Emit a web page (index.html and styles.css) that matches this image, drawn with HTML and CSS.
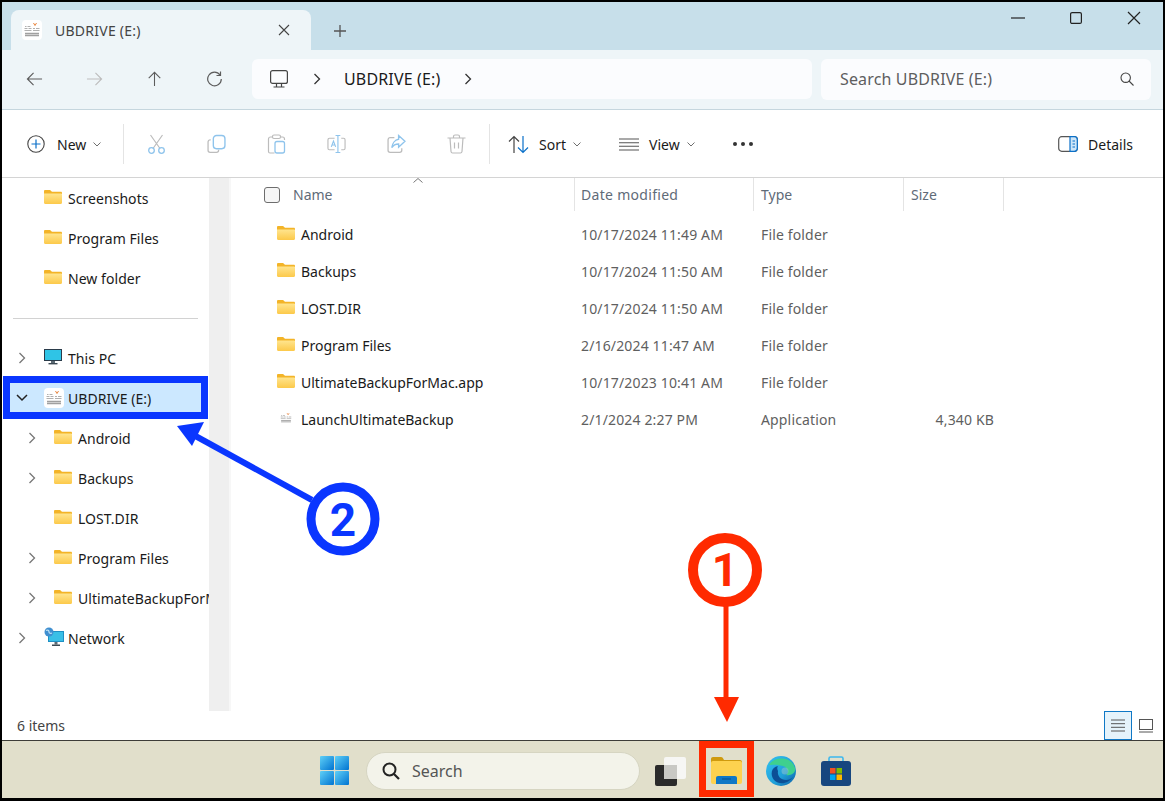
FILE: index.html
```html
<!DOCTYPE html>
<html lang="en">

<head>
    <meta charset="UTF-8" />
    <title>UBDRIVE (E:) - File Explorer</title>
    <link rel="stylesheet" href="styles.css">
</head>

<body>
    <!-- shared icons -->
    <svg class="defs">
        <defs>
            <linearGradient id="folderFill" x1="0" y1="0" x2="0" y2="1">
                <stop offset="0" stop-color="#ffe58f" />
                <stop offset="1" stop-color="#fcc94a" />
            </linearGradient>
            <linearGradient id="winFill" x1="0" y1="0" x2="1" y2="1">
                <stop offset="0" stop-color="#5fd0f7" />
                <stop offset="1" stop-color="#0073d1" />
            </linearGradient>
            <linearGradient id="edgeFill" x1="0" y1="0" x2="1" y2="1">
                <stop offset="0" stop-color="#35c1f1" />
                <stop offset="0.6" stop-color="#1f9fd8" />
                <stop offset="1" stop-color="#0c59a4" />
            </linearGradient>
            <symbol id="folder" viewBox="0 0 18 14">
                <path d="M0 1.2C0 .5.5 0 1.2 0h4.400c.4 0 .7.1 1 .4L8 1.800h8.800c.7 0 1.200.5 1.200 1.200v1H0z" fill="#f3b428" />
                <path d="M0 3.400h16.800c.7 0 1.200.5 1.200 1.200v8.200c0 .7-.5 1.200-1.200 1.200H1.200C.5 14 0 13.500 0 12.800z" fill="url(#folderFill)" />
            </symbol>
            <symbol id="ublogo" viewBox="0 0 20 20">
                <path d="M11.500 3l1.500 2.500L14.500 3" fill="none" stroke="#e8843c" stroke-width="1" />
                <path d="M3 6.500h1.500M5.500 6.500h3M2.500 8.500h3M6.500 8.500h3M11 8.500h2M14 8.500h3.500M2.500 10.500h7M11 10.500h6.500" stroke="#b0b0b0" stroke-width="1.100" />
                <path d="M3 13.500h14M3 15.500h14" stroke="#a0a0a0" stroke-width="1.300" />
            </symbol>
            <symbol id="chevR" viewBox="0 0 8 12">
                <path d="M1.500 1l5 5-5 5" fill="none" stroke="currentColor" stroke-width="1.300" />
            </symbol>
            <symbol id="caret" viewBox="0 0 8 5">
                <path d="M.5.500L4 4 7.500.500" fill="none" stroke="#6e6e6e" stroke-width="1" />
            </symbol>
        </defs>
    </svg>

    <div class="window">
        <!-- title bar with tab -->
        <div class="tabbar">
            <div class="tab">
                <svg class="tab-logo"><use href="#ublogo" /></svg>
                <span class="tab-title">UBDRIVE (E:)</span>
                <svg class="tab-close" viewBox="0 0 12 12"><path d="M1 1l10 10M11 1L1 11" stroke="#444" stroke-width="1.100" /></svg>
            </div>
            <svg class="tab-add" viewBox="0 0 14 14"><path d="M7 1v12M1 7h12" stroke="#555" stroke-width="1.300" /></svg>
            <div class="win-controls">
                <svg viewBox="0 0 14 14"><path d="M0 7h14" stroke="#222" stroke-width="1.200" /></svg>
                <svg viewBox="0 0 14 14"><rect x="1.600" y="1.600" width="10.800" height="10.800" rx="1.500" fill="none" stroke="#222" stroke-width="1.200" /></svg>
                <svg viewBox="0 0 14 14"><path d="M1 1l12 12M13 1L1 13" stroke="#222" stroke-width="1.200" /></svg>
            </div>
        </div>

        <!-- navigation and address -->
        <div class="navbar">
            <div class="nav-btn">
                <svg viewBox="0 0 18 16"><path d="M17 8H1.500M8 1.500L1.500 8 8 14.500" fill="none" stroke="#5c5c5c" stroke-width="1.200" /></svg>
            </div>
            <div class="nav-btn">
                <svg viewBox="0 0 18 16"><path d="M1 8h15.500M10 1.500L16.500 8 10 14.500" fill="none" stroke="#bdbdbd" stroke-width="1.200" /></svg>
            </div>
            <div class="nav-btn">
                <svg viewBox="0 0 16 18"><path d="M8 17V1.500M1.500 8L8 1.500 14.500 8" fill="none" stroke="#5c5c5c" stroke-width="1.200" /></svg>
            </div>
            <div class="nav-btn">
                <svg viewBox="0 0 16 16"><path d="M13.500 4A6.800 6.800 0 1 0 14.800 8" fill="none" stroke="#5c5c5c" stroke-width="1.200" /><path d="M14 .5v4h-4" fill="none" stroke="#5c5c5c" stroke-width="1.200" /></svg>
            </div>
            <div class="address">
                <svg class="addr-pc" viewBox="0 0 18 18"><rect x=".6" y=".6" width="16.800" height="12.800" rx="2" fill="none" stroke="#444" stroke-width="1.200" /><path d="M6.500 13.500v3M11.500 13.500v3M3.500 17h11" fill="none" stroke="#444" stroke-width="1.200" /></svg>
                <svg class="addr-chev"><use href="#chevR" /></svg>
                <span class="addr-text">UBDRIVE (E:)</span>
                <svg class="addr-chev"><use href="#chevR" /></svg>
            </div>
            <div class="searchbox">
                <span>Search UBDRIVE (E:)</span>
                <svg viewBox="0 0 14 14"><circle cx="5.700" cy="5.700" r="4.700" fill="none" stroke="#444" stroke-width="1.100" /><path d="M9 9l4.500 4.500" stroke="#444" stroke-width="1.100" /></svg>
            </div>
        </div>

        <!-- command bar -->
        <div class="toolbar">
            <div class="tool-new">
                <svg class="tool-svg" viewBox="0 0 18 18"><circle cx="9" cy="9" r="8.200" fill="none" stroke="#444" stroke-width="1.100" /><path d="M9 4.500v9M4.500 9h9" stroke="#0a70c9" stroke-width="1.200" /></svg>
                <span>New</span>
                <svg class="caret"><use href="#caret" /></svg>
            </div>
            <div class="tool-sep"></div>
            <div class="tool-icons">
                <div class="tool-icon">
                    <svg viewBox="0 0 18 20"><path d="M3 1l9.500 13.500M15 1L5.500 14.500" fill="none" stroke="#bcbcbc" stroke-width="1.200" /><circle cx="4" cy="16.500" r="2.800" fill="none" stroke="#8fc4ec" stroke-width="1.300" /><circle cx="14" cy="16.500" r="2.800" fill="none" stroke="#8fc4ec" stroke-width="1.300" /></svg>
                </div>
                <div class="tool-icon">
                    <svg viewBox="0 0 18 18"><path d="M3.500 5H3C1.900 5 1 5.900 1 7v8c0 1.100.9 2 2 2h6c1.100 0 2-.9 2-2v-.5" fill="none" stroke="#bcbcbc" stroke-width="1.200" /><rect x="6" y="1" width="11" height="12.500" rx="3" fill="none" stroke="#8fc4ec" stroke-width="1.300" /></svg>
                </div>
                <div class="tool-icon">
                    <svg viewBox="0 0 18 20"><path d="M5 3H3C1.900 3 1 3.900 1 5v12.500c0 .8.700 1.500 1.500 1.500H7M13 3h2c1.100 0 2 .9 2 2v1" fill="none" stroke="#bcbcbc" stroke-width="1.200" /><rect x="5" y="1" width="8" height="3.500" rx="1.500" fill="none" stroke="#bcbcbc" stroke-width="1.200" /><rect x="7.500" y="7.500" width="9.500" height="11.500" rx="2" fill="none" stroke="#8fc4ec" stroke-width="1.300" /></svg>
                </div>
                <div class="tool-icon">
                    <svg viewBox="0 0 20 20"><path d="M8 4H2.500C1.700 4 1 4.700 1 5.500v9c0 .8.700 1.500 1.500 1.500H8M15 4h2.500c.8 0 1.500.7 1.500 1.500v9c0 .8-.7 1.500-1.500 1.500H15" fill="none" stroke="#bcbcbc" stroke-width="1.200" /><path d="M11.500 1v18M9 1h5M9 19h5M4.500 13l2.300-6 2.300 6M5.300 11h3" fill="none" stroke="#8fc4ec" stroke-width="1.200" /></svg>
                </div>
                <div class="tool-icon">
                    <svg viewBox="0 0 18 18"><path d="M7 3H3C1.900 3 1 3.900 1 5v10c0 1.100.9 2 2 2h9c1.100 0 2-.9 2-2v-2" fill="none" stroke="#bcbcbc" stroke-width="1.200" /><path d="M11 1l6 5.500-6 5.500V9C8 9 6 10 4.500 12.500 5 8.500 7.500 5 11 4.500z" fill="none" stroke="#8fc4ec" stroke-width="1.300" /></svg>
                </div>
                <div class="tool-icon">
                    <svg viewBox="0 0 18 20"><path d="M0 4h18M6 4V2.500C6 1.700 6.700 1 7.500 1h3c.8 0 1.500.7 1.500 1.500V4M2.500 4l1 13.500c.1.900.8 1.500 1.600 1.500h7.800c.8 0 1.500-.6 1.600-1.500l1-13.500M7 8.500v6M11 8.500v6" fill="none" stroke="#bcbcbc" stroke-width="1.200" /></svg>
                </div>
            </div>
            <div class="tool-sep"></div>
            <div class="tool-sort">
                <svg class="sort-svg" viewBox="0 0 22 19"><path d="M6 18V1.500M1 6.500l5-5 5 5" fill="none" stroke="#444" stroke-width="1.200" /><path d="M15 1v16.500M10 12.500l5 5 5-5" fill="none" stroke="#0a70c9" stroke-width="1.200" /></svg>
                <span>Sort</span>
                <svg class="caret"><use href="#caret" /></svg>
            </div>
            <div class="tool-view">
                <svg class="view-svg" viewBox="0 0 20 13"><path d="M0 1h20M0 4.700h20M0 8.300h20M0 12h20" stroke="#555" stroke-width="1.100" /></svg>
                <span>View</span>
                <svg class="caret"><use href="#caret" /></svg>
            </div>
            <div class="tool-more"><i></i><i></i><i></i></div>
            <div class="tool-details">
                <svg viewBox="0 0 20 16"><rect x=".7" y=".7" width="18.600" height="14.600" rx="3" fill="none" stroke="#555" stroke-width="1.200" /><path d="M12 .7h4.300c1.700 0 3 1.300 3 3v8.600c0 1.700-1.300 3-3 3H12z" fill="#cfe6f8" stroke="#0a70c9" stroke-width="1.200" /><path d="M14.500 5h2.500M14.500 8h2.500M14.500 11h2.500" stroke="#0a70c9" stroke-width="1" /></svg>
                <span>Details</span>
            </div>
        </div>

        <div class="main">
            <!-- folder tree -->
            <div class="sidebar">
                <div class="tree-row"><span class="tree-arrow"></span><svg class="folder-icon"><use href="#folder" /></svg><span>Screenshots</span></div>
                <div class="tree-row"><span class="tree-arrow"></span><svg class="folder-icon"><use href="#folder" /></svg><span>Program Files</span></div>
                <div class="tree-row"><span class="tree-arrow"></span><svg class="folder-icon"><use href="#folder" /></svg><span>New folder</span></div>
                <div class="tree-sep"></div>
                <div class="tree-row">
                    <span class="tree-arrow"><svg><use href="#chevR" /></svg></span>
                    <svg class="folder-icon pc-icon" viewBox="0 0 18 16"><rect x="0" y="0" width="18" height="12" fill="#2a3b4a" /><rect x="1" y="1" width="16" height="10" fill="#2fc4e6" /><rect x="7" y="12" width="4" height="2" fill="#5c6a74" /><rect x="4.500" y="14" width="9" height="1.400" fill="#3d4a54" /></svg>
                    <span>This PC</span>
                </div>
                <div class="tree-row selected">
                    <span class="tree-arrow"><svg class="open" viewBox="0 0 12 8"><path d="M1 1l5 5 5-5" fill="none" stroke="#222" stroke-width="1.500" /></svg></span>
                    <span class="drive-icon"><svg><use href="#ublogo" /></svg></span>
                    <span>UBDRIVE (E:)</span>
                </div>
                <div class="tree-row sub"><span class="tree-arrow"><svg><use href="#chevR" /></svg></span><svg class="folder-icon"><use href="#folder" /></svg><span>Android</span></div>
                <div class="tree-row sub"><span class="tree-arrow"><svg><use href="#chevR" /></svg></span><svg class="folder-icon"><use href="#folder" /></svg><span>Backups</span></div>
                <div class="tree-row sub"><span class="tree-arrow"></span><svg class="folder-icon"><use href="#folder" /></svg><span>LOST.DIR</span></div>
                <div class="tree-row sub"><span class="tree-arrow"><svg><use href="#chevR" /></svg></span><svg class="folder-icon"><use href="#folder" /></svg><span>Program Files</span></div>
                <div class="tree-row sub"><span class="tree-arrow"><svg><use href="#chevR" /></svg></span><svg class="folder-icon"><use href="#folder" /></svg><span>UltimateBackupForMac.app</span></div>
                <div class="tree-row">
                    <span class="tree-arrow"><svg><use href="#chevR" /></svg></span>
                    <svg class="folder-icon net-icon" viewBox="0 0 20 20"><rect x="4" y="4" width="16" height="11" fill="#1f8fc4" /><rect x="5" y="5" width="14" height="9" fill="#39bfe6" /><rect x="10.500" y="15" width="3" height="2.500" fill="#5c6a74" /><rect x="8" y="17.500" width="8" height="1.500" fill="#3d4a54" /><circle cx="5" cy="5" r="4.500" fill="#3f8fd0" /><path d="M2 3.500c2-1 3 0 3 1.500s2 1.500 3 1" fill="none" stroke="#bfe3f7" stroke-width="1.200" /></svg>
                    <span>Network</span>
                </div>
            </div>
            <div class="scrolltrack"></div>

            <!-- file list -->
            <div class="content">
                <div class="list-head">
                    <div class="head-name">
                        <span class="checkbox"></span>
                        <span>Name</span>
                        <svg class="sort-caret" viewBox="0 0 10 5"><path d="M.5 4.500L5 .5l4.500 4" fill="none" stroke="#777" stroke-width="1" /></svg>
                    </div>
                    <div class="head-date">Date modified</div>
                    <div class="head-type">Type</div>
                    <div class="head-size">Size</div>
                </div>
                <div class="file-row"><span class="file-name"><svg class="folder-icon"><use href="#folder" /></svg>Android</span><span>10/17/2024 11:49 AM</span><span>File folder</span><span class="file-size"></span></div>
                <div class="file-row"><span class="file-name"><svg class="folder-icon"><use href="#folder" /></svg>Backups</span><span>10/17/2024 11:50 AM</span><span>File folder</span><span class="file-size"></span></div>
                <div class="file-row"><span class="file-name"><svg class="folder-icon"><use href="#folder" /></svg>LOST.DIR</span><span>10/17/2024 11:50 AM</span><span>File folder</span><span class="file-size"></span></div>
                <div class="file-row"><span class="file-name"><svg class="folder-icon"><use href="#folder" /></svg>Program Files</span><span>2/16/2024 11:47 AM</span><span>File folder</span><span class="file-size"></span></div>
                <div class="file-row"><span class="file-name"><svg class="folder-icon"><use href="#folder" /></svg>UltimateBackupForMac.app</span><span>10/17/2023 10:41 AM</span><span>File folder</span><span class="file-size"></span></div>
                <div class="file-row"><span class="file-name"><svg class="folder-icon"><use href="#ublogo" /></svg>LaunchUltimateBackup</span><span>2/1/2024 2:27 PM</span><span>Application</span><span class="file-size">4,340 KB</span></div>
            </div>
        </div>

        <div class="statusbar">
            <span>6 items</span>
            <div class="view-toggle">
                <div class="toggle-list"><svg viewBox="0 0 14 13"><path d="M0 1h14M0 4.700h14M0 8.300h14M0 12h14" stroke="#555" stroke-width="1" /></svg></div>
                <svg class="toggle-tile" viewBox="0 0 14 14"><rect x=".5" y=".5" width="13" height="10" fill="none" stroke="#555" /><path d="M0 13h14" stroke="#555" /></svg>
            </div>
        </div>

        <!-- taskbar -->
        <div class="taskbar">
            <svg class="task-win" viewBox="0 0 29 29">
                <rect x="0" y="0" width="14" height="14" rx="1" fill="url(#winFill)" />
                <rect x="15" y="0" width="14" height="14" rx="1" fill="url(#winFill)" />
                <rect x="0" y="15" width="14" height="14" rx="1" fill="url(#winFill)" />
                <rect x="15" y="15" width="14" height="14" rx="1" fill="url(#winFill)" />
            </svg>
            <div class="task-search">
                <svg viewBox="0 0 18 18"><circle cx="7.500" cy="7.500" r="6" fill="none" stroke="#222" stroke-width="2" /><path d="M12 12l5 5" stroke="#222" stroke-width="2.200" /></svg>
                <span>Search</span>
            </div>
            <svg class="task-view" viewBox="0 0 31 30">
                <rect x="9" y="1" width="22" height="22" rx="2" fill="#f6f6f4" />
                <rect x="0" y="9" width="22" height="21" rx="2" fill="#2a2a2a" />
                <rect x="9" y="9" width="13" height="14" fill="#c8c8c4" />
            </svg>
            <svg class="task-folder" viewBox="0 0 31 27">
                <path d="M0 2c0-1.100.9-2 2-2h8c.7 0 1.300.3 1.700.8L13 3h16c1.100 0 2 .9 2 2v3H0z" fill="#cf9a0e" />
                <rect x="0" y="4" width="31" height="23" rx="2" fill="#fdd24f" />
                <path d="M5 27v-6c0-1.100.9-2 2-2h17c1.100 0 2 .9 2 2v6z" fill="#0f78c6" />
                <path d="M11 22h9" stroke="#0a4f87" stroke-width="1" />
            </svg>
            <svg class="task-edge" viewBox="0 0 30 30">
                <circle cx="15" cy="15" r="15" fill="url(#edgeFill)" />
                <path d="M3 9C7 1 25 -1 29 12c1 5-4 8-9 7 3-2 3-7-3-9C10 8 5 9 3 9z" fill="#3fd08e" />
                <path d="M12 15c-1 5 3 9 8 9 3 0 5-1 7-3-4 6-13 9-19 3-4-5-3-13 4-14-1 1-1 3 0 5z" fill="#0c4f96" />
                <circle cx="19" cy="15" r="3.500" fill="#e1dfcb" opacity="0.3" />
            </svg>
            <svg class="task-store" viewBox="0 0 30 30">
                <path d="M8 5V2.500C8 1.500 8.800 1 9.500 1h11c.7 0 1.500.5 1.500 1.500V5" fill="none" stroke="#3db8ee" stroke-width="1.600" />
                <rect x="0" y="5" width="30" height="25" rx="3" fill="#17467f" />
                <rect x="9" y="12" width="5.500" height="5.500" fill="#f25022" />
                <rect x="15.500" y="12" width="5.500" height="5.500" fill="#7fba00" />
                <rect x="9" y="18.500" width="5.500" height="5.500" fill="#00a4ef" />
                <rect x="15.500" y="18.500" width="5.500" height="5.500" fill="#ffb900" />
            </svg>
        </div>
    </div>

    <!-- annotations painted on top of the screenshot -->
    <svg class="marks" viewBox="0 0 1165 801">
        <rect x="6.500" y="379.500" width="198" height="36" fill="none" stroke="#0a36ff" stroke-width="7" />
        <path d="M312 500L190 433" stroke="#0a36ff" stroke-width="6" />
        <path d="M177 426l27-4-12 24z" fill="#0a36ff" />
        <circle cx="343" cy="519" r="32" fill="#fff" stroke="#0a36ff" stroke-width="9" />
        <text class="mark-num" x="343" y="536" text-anchor="middle" fill="#0a36ff">2</text>
        <circle cx="725" cy="570" r="32" fill="#fff" stroke="#ff2a00" stroke-width="10" />
        <text class="mark-num" x="725" y="586" text-anchor="middle" fill="#ff2a00">1</text>
        <path d="M726 606v92" stroke="#ff2a00" stroke-width="5" />
        <path d="M714 697h25l-12 25z" fill="#ff2a00" />
        <rect x="702.500" y="744.500" width="48" height="49" fill="none" stroke="#ff2a00" stroke-width="7" />
    </svg>
</body>

</html>
```

FILE: styles.css
```css
* {
    box-sizing: border-box;
}

html,
body {
    margin: 0;
    padding: 0;
}

body {
    position: relative;
    width: 1165px;
    height: 801px;
    overflow: hidden;
    background: #000;
    font-family: "Noto Sans", "Liberation Sans", sans-serif;
    font-size: 14px;
    color: #1a1a1a;
}

svg {
    display: block;
    flex: none;
}

.defs {
    width: 0;
    height: 0;
}

.window {
    width: 1161px;
    height: 796px;
    margin: 2px 2px 0;
    background: #fff;
    display: flex;
    flex-direction: column;
}

/* title bar */
.tabbar {
    height: 48px;
    background: #c7dfea;
    display: flex;
    align-items: flex-end;
    flex: none;
}

.tab {
    width: 300px;
    height: 40px;
    margin-left: 9px;
    background: #eef5f8;
    border-radius: 8px 8px 0 0;
    display: flex;
    align-items: center;
    padding: 0 21px 0 11px;
}

.tab-logo {
    width: 20px;
    height: 20px;
    background: #fff;
    border-radius: 4px;
}

.tab-title {
    margin-left: 13px;
    flex: 1;
    color: #444;
    letter-spacing: 0.25px;
}

.tab-close {
    width: 12px;
    height: 12px;
}

.tab-add {
    width: 14px;
    height: 14px;
    margin: 0 0 12px 22px;
}

.win-controls {
    margin-left: auto;
    align-self: flex-start;
    display: flex;
    gap: 44px;
    padding: 9px 22px 0 0;
}

.win-controls svg {
    width: 14px;
    height: 14px;
}

/* navigation */
.navbar {
    height: 60px;
    background: #eef5f8;
    border-bottom: 1px solid #c5d6de;
    display: flex;
    align-items: center;
    padding: 0 12px 1px 2px;
    flex: none;
}

.nav-btn {
    width: 60px;
    display: flex;
    justify-content: center;
}

.nav-btn svg {
    width: 17px;
    height: 16px;
}

.address {
    width: 560px;
    height: 40px;
    margin-left: 8px;
    background: #fbfcfe;
    border-radius: 6px;
    display: flex;
    align-items: center;
    padding-left: 18px;
    font-size: 16px;
}

.addr-pc {
    width: 18px;
    height: 18px;
}

.addr-chev {
    width: 8px;
    height: 12px;
    margin-left: 25px;
    color: #333;
}

.addr-text {
    margin-left: 23px;
    margin-right: -1px;
    letter-spacing: 0.15px;
}

.searchbox {
    width: 330px;
    height: 41px;
    margin-left: 9px;
    background: #fbfcfe;
    border-radius: 6px;
    display: flex;
    align-items: center;
    justify-content: space-between;
    padding: 0 17px 0 19px;
    font-size: 16px;
    color: #5e5e5e;
    letter-spacing: 0.15px;
}

.searchbox svg {
    width: 14px;
    height: 14px;
}

/* command bar */
.toolbar {
    height: 68px;
    padding-top: 1px;
    border-bottom: 1px solid #d4d4d4;
    display: flex;
    align-items: center;
    flex: none;
}

.tool-new {
    width: 121px;
    padding-left: 25px;
    display: flex;
    align-items: center;
}

.tool-svg {
    width: 18px;
    height: 18px;
}

.tool-new span {
    margin-left: 12px;
}

.caret {
    width: 8px;
    height: 5px;
    margin-left: 7px;
}

.tool-sep {
    width: 1px;
    height: 40px;
    background: #e4e4e4;
}

.tool-icons {
    display: flex;
    margin-left: 2px;
}

.tool-icon {
    width: 60px;
    display: flex;
    justify-content: center;
}

.tool-icon svg {
    width: 19px;
    height: 20px;
}

.tool-icons + .tool-sep {
    margin-left: 3px;
}

.tool-sort {
    margin-left: 18px;
    width: 111px;
    display: flex;
    align-items: center;
}

.sort-svg {
    width: 22px;
    height: 19px;
}

.tool-sort span {
    margin-left: 9px;
}

.tool-view {
    width: 114px;
    display: flex;
    align-items: center;
}

.view-svg {
    width: 20px;
    height: 13px;
}

.tool-view span {
    margin-left: 10px;
}

.tool-more {
    display: flex;
    gap: 4px;
}

.tool-more i {
    width: 4px;
    height: 4px;
    border-radius: 50%;
    background: #333;
}

.tool-details {
    margin-left: auto;
    padding-right: 30px;
    display: flex;
    align-items: center;
    gap: 10px;
}

.tool-details svg {
    width: 20px;
    height: 16px;
}

/* main area */
.main {
    flex: 1;
    display: flex;
    min-height: 0;
}

.sidebar {
    width: 207px;
    overflow: hidden;
    flex: none;
}

.tree-row {
    height: 40px;
    display: flex;
    align-items: center;
    white-space: nowrap;
    letter-spacing: 0.05px;
}

.tree-arrow {
    width: 42px;
    padding-left: 16px;
    color: #777;
    flex: none;
}

.tree-arrow svg {
    width: 8px;
    height: 12px;
}

.tree-arrow svg.open {
    width: 12px;
    height: 8px;
    margin-left: -2px;
}

.tree-row.sub .tree-arrow {
    width: 52px;
    padding-left: 26px;
}

.folder-icon {
    width: 18px;
    height: 14px;
    margin-right: 6px;
    margin-bottom: 2px;
}

.pc-icon {
    height: 16px;
}

.net-icon {
    width: 20px;
    height: 20px;
    margin-right: 4px;
}

.tree-sep {
    height: 1px;
    margin: 20px 11px 19px 11px;
    background: #d2d2d2;
}

.tree-row.selected {
    margin-left: 6px;
    width: 195px;
    background: #cce8ff;
}

.tree-row.selected .tree-arrow {
    width: 36px;
    padding-left: 10px;
}

.drive-icon {
    width: 20px;
    height: 20px;
    margin-right: 4px;
    background: #fff;
    border-radius: 4px;
}

.drive-icon svg {
    width: 20px;
    height: 20px;
}

.scrolltrack {
    width: 20px;
    background: #efefef;
    flex: none;
}

.content {
    flex: 1;
    border-left: 2px solid #f7f7f7;
}

.list-head {
    display: flex;
    height: 33px;
    align-items: center;
    color: #5f6b78;
}

.list-head > div {
    height: 100%;
    display: flex;
    align-items: center;
    border-right: 1px solid #e4e4e4;
}

.head-name {
    position: relative;
    width: 344px;
    padding-left: 33px;
}

.checkbox {
    width: 16px;
    height: 16px;
    border: 1px solid #6d6d6d;
    border-radius: 3px;
    background: #f6f6f6;
    margin-right: 13px;
}

.sort-caret {
    position: absolute;
    left: 182px;
    top: 0;
    width: 10px;
    height: 5px;
}

.head-date {
    width: 179px;
    padding-left: 6px;
    letter-spacing: 0.3px;
}

.head-type {
    width: 150px;
    padding-left: 7px;
}

.head-size {
    width: 100px;
    padding-left: 7px;
}

.file-row {
    display: grid;
    grid-template-columns: 304px 180px 150px 83px;
    height: 37px;
    align-items: center;
    padding-left: 46px;
    color: #5f5f5f;
    letter-spacing: 0.15px;
}

.file-row:nth-child(2) {
    margin-top: 5px;
}

.file-name {
    display: flex;
    align-items: center;
    color: #1a1a1a;
    letter-spacing: 0;
}

.file-name .folder-icon {
    margin-bottom: 4px;
}

.file-size {
    text-align: right;
}

/* status bar */
.statusbar {
    height: 29px;
    display: flex;
    align-items: center;
    justify-content: space-between;
    padding-left: 15px;
    color: #444;
    flex: none;
}

.view-toggle {
    display: flex;
    align-items: center;
    height: 100%;
    padding-right: 10px;
}

.toggle-list {
    width: 28px;
    height: 29px;
    background: #e5f3fb;
    border: 1px solid #0f78c6;
    display: flex;
    align-items: center;
    justify-content: center;
}

.toggle-list svg {
    width: 14px;
    height: 13px;
}

.toggle-tile {
    width: 14px;
    height: 14px;
    margin-left: 7px;
}

/* taskbar */
.taskbar {
    height: 58px;
    padding-top: 2px;
    background: #e1dfcb;
    border-top: 1px solid #3d3d38;
    display: flex;
    align-items: center;
    padding-left: 318px;
    flex: none;
}

.task-win {
    width: 29px;
    height: 29px;
}

.task-search {
    width: 274px;
    height: 38px;
    margin-left: 17px;
    background: #f3f3ea;
    border: 1px solid #d6d5c2;
    border-radius: 19px;
    display: flex;
    align-items: center;
    padding-left: 15px;
    font-size: 16px;
    color: #555;
}

.task-search svg {
    width: 18px;
    height: 18px;
    margin-right: 12px;
}

.task-view {
    width: 31px;
    height: 30px;
    margin-left: 15px;
}

.task-folder {
    width: 31px;
    height: 27px;
    margin-left: 25px;
}

.task-edge {
    width: 30px;
    height: 30px;
    margin-left: 24px;
}

.task-store {
    width: 30px;
    height: 30px;
    margin-left: 25px;
}

/* annotations */
.marks {
    position: absolute;
    left: 0;
    top: 0;
    width: 1165px;
    height: 801px;
}

.mark-num {
    font-family: Roboto, "Liberation Sans", sans-serif;
    font-size: 46px;
    font-weight: 700;
}
```
